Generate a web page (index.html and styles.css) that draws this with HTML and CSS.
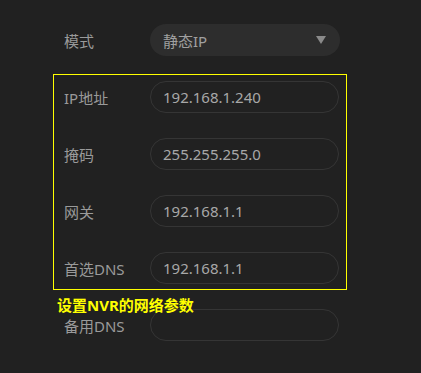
FILE: index.html
```html
<!DOCTYPE html>
<html lang="zh-CN">
<head>
    <meta charset="UTF-8">
    <meta name="viewport" content="width=device-width, initial-scale=1.0">
    <title>网络设置</title>
    <link rel="stylesheet" href="styles.css">
</head>
<body>
    <div class="page">
        <form class="net-form">
            <div class="row">
                <label>模式</label>
                <div class="select">
                    <span>静态IP</span>
                    <span class="caret"></span>
                </div>
            </div>
            <div class="row">
                <label>IP地址</label>
                <div class="field">192.168.1.240</div>
            </div>
            <div class="row">
                <label>掩码</label>
                <div class="field">255.255.255.0</div>
            </div>
            <div class="row">
                <label>网关</label>
                <div class="field">192.168.1.1</div>
            </div>
            <div class="row">
                <label>首选DNS</label>
                <div class="field">192.168.1.1</div>
            </div>
            <div class="row">
                <label>备用DNS</label>
                <div class="field"></div>
            </div>
        </form>

        <!-- annotation over the form -->
        <div class="mark"></div>
        <div class="mark-note">设置NVR的网络参数</div>
    </div>
</body>
</html>
```

FILE: styles.css
```css
html, body {
    margin: 0;
    height: 100%;
    background-color: #212121;
}

body {
    font-family: "Noto Sans", "Noto Sans CJK SC", sans-serif;
    font-size: 15px;
    color: #9a9a9a;
}

.page {
    position: relative;
    height: 100%;
}

.net-form {
    display: flex;
    flex-direction: column;
    gap: 25px;
    padding: 24px 0 0 64px;
}

.row {
    display: flex;
    align-items: center;
    height: 32px;
}

.row label {
    width: 86px;
}

.select {
    display: flex;
    align-items: center;
    justify-content: space-between;
    box-sizing: border-box;
    width: 190px;
    height: 32px;
    padding: 0 14px 0 13px;
    border-radius: 16px;
    background-color: #2d2d2d;
    color: #a0a0a0;
}

.caret {
    width: 0;
    height: 0;
    border-left: 5px solid transparent;
    border-right: 5px solid transparent;
    border-top: 8px solid #8a8a8a;
}

.field {
    box-sizing: border-box;
    width: 189px;
    height: 32px;
    padding: 0 12px;
    line-height: 30px;
    border: 1px solid #353535;
    border-radius: 16px;
    color: #a8a8a8;
}

.mark {
    position: absolute;
    left: 53px;
    top: 74px;
    width: 292px;
    height: 214px;
    border: 1px solid #ffff00;
}

.mark-note {
    position: absolute;
    left: 57px;
    top: 294px;
    font-size: 15px;
    font-weight: bold;
    color: #ffff00;
}
```
